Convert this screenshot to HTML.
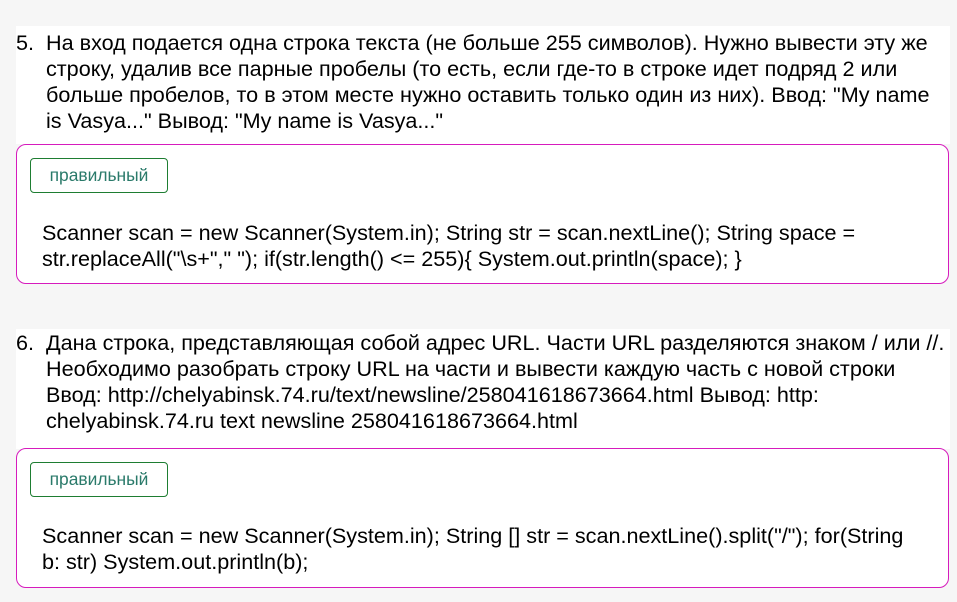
<!DOCTYPE html>
<html><head><meta charset="utf-8"><style>
body{margin:0;width:957px;height:602px;background:#f6f6f6;font-family:"Liberation Sans","DejaVu Sans",sans-serif;color:#000;position:relative;overflow:hidden}
.w{position:absolute;left:16px;width:934px;background:#fff}
.q{position:absolute;font-size:21.6px;line-height:26px;white-space:nowrap}
.q .n{position:absolute;left:0}
.q .t{position:absolute;left:30px}
.box{position:absolute;left:16px;width:931px;border:1.5px solid #d61bbd;border-radius:10px;background:#fff}
.badge{position:absolute;left:13px;width:136px;height:33px;border:1.3px solid #1e7d32;border-radius:4px;color:#2a7a6a;font-size:17.4px;line-height:33px;text-align:center}
.code{position:absolute;left:25px;font-size:21.6px;line-height:26px;white-space:nowrap}
</style></head><body>
<div class="w" style="top:26px;height:118px"></div>
<div class="w" style="top:329px;height:120px"></div>
<div class="q" style="left:16px;top:30px;width:934px">
<div class="n">5.</div>
<div class="t">На вход подается одна строка текста (не больше 255 символов). Нужно вывести эту же<br>строку, удалив все парные пробелы (то есть, если где-то в строке идет подряд 2 или<br>больше пробелов, то в этом месте нужно оставить только один из них). Ввод: "My name<br>is Vasya..." Вывод: "My name is Vasya..."</div>
</div>
<div class="box" style="top:144px;height:138px">
<div class="badge" style="top:13px">правильный</div>
<div class="code" style="top:75px">Scanner scan = new Scanner(System.in); String str = scan.nextLine(); String space =<br>str.replaceAll("\s+"," "); if(str.length() &lt;= 255){ System.out.println(space); }</div>
</div>
<div class="q" style="left:16px;top:330px;width:934px">
<div class="n">6.</div>
<div class="t">Дана строка, представляющая собой адрес URL. Части URL разделяются знаком / или //.<br>Необходимо разобрать строку URL на части и вывести каждую часть с новой строки<br>Ввод: http://chelyabinsk.74.ru/text/newsline/258041618673664.html Вывод: http:<br>chelyabinsk.74.ru text newsline 258041618673664.html</div>
</div>
<div class="box" style="top:448px;height:138px">
<div class="badge" style="top:13px">правильный</div>
<div class="code" style="top:74px">Scanner scan = new Scanner(System.in); String [] str = scan.nextLine().split("/"); for(String<br>b: str) System.out.println(b);</div>
</div>
</body></html>
